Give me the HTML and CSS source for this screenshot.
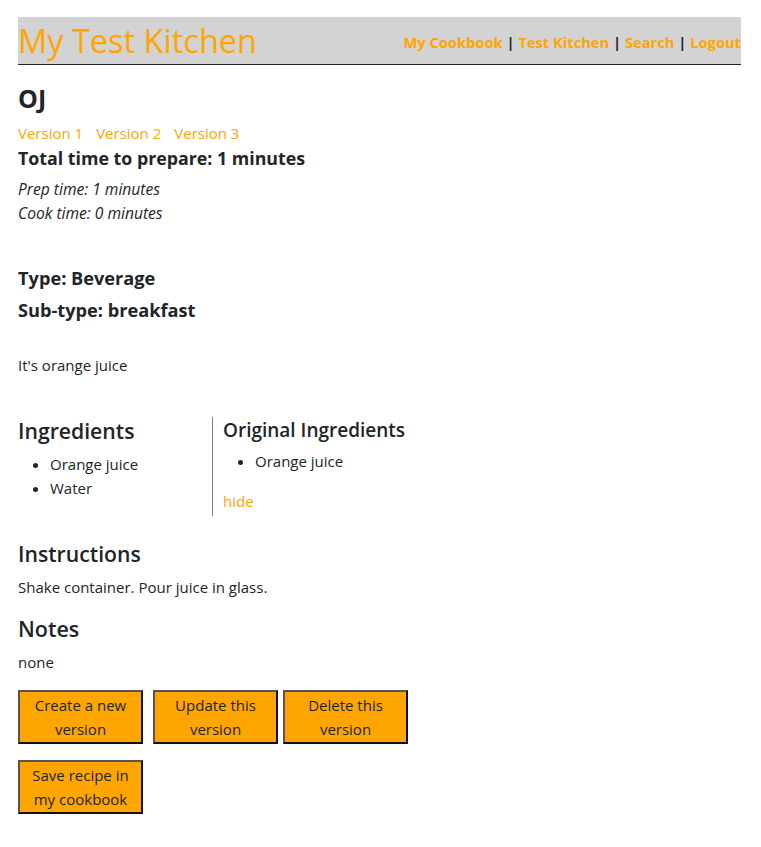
FILE: index.html
```html
<!DOCTYPE html>
<html lang="en">
<head>
<meta charset="utf-8">
<title>My Test Kitchen</title>
<link rel="stylesheet" href="styles.css">
</head>
<body>
<header class="topbar">
  <h1 class="brand">My Test Kitchen</h1>
  <nav class="nav">
    <a href="#" class="nav-link">My Cookbook</a> | <a href="#" class="nav-link">Test Kitchen</a> | <a href="#" class="nav-link">Search</a> | <a href="#" class="nav-link">Logout</a>
  </nav>
</header>

<main class="recipe">
  <h2 class="recipe-title">OJ</h2>
  <div class="versions">
    <a href="#" class="version-link">Version 1</a>
    <a href="#" class="version-link">Version 2</a>
    <a href="#" class="version-link">Version 3</a>
  </div>
  <h3 class="total-time">Total time to prepare: 1 minutes</h3>
  <p class="time-line">Prep time: 1 minutes</p>
  <p class="time-line">Cook time: 0 minutes</p>

  <h3 class="type-line type-first">Type: Beverage</h3>
  <h3 class="type-line">Sub-type: breakfast</h3>

  <p class="description">It's orange juice</p>

  <section class="ingredients-row">
    <div class="ingredients">
      <h2 class="section-title">Ingredients</h2>
      <ul class="ing-list">
        <li>Orange juice</li>
        <li>Water</li>
      </ul>
    </div>
    <div class="original">
      <h3 class="original-title">Original Ingredients</h3>
      <ul class="ing-list orig-list">
        <li>Orange juice</li>
      </ul>
      <a href="#" class="hide-link">hide</a>
    </div>
  </section>

  <h2 class="section-title instructions-title">Instructions</h2>
  <p class="body-text">Shake container. Pour juice in glass.</p>

  <h2 class="section-title notes-title">Notes</h2>
  <p class="body-text">none</p>

  <div class="button-row first-row">
    <button class="action-btn btn-create">Create a new version</button>
    <button class="action-btn">Update this version</button>
    <button class="action-btn">Delete this version</button>
  </div>
  <div class="button-row">
    <button class="action-btn">Save recipe in my cookbook</button>
  </div>
</main>
</body>
</html>
```
FILE: styles.css
```css
html, body {
  background: #ffffff;
}
body {
  margin: 17px 20px 0 18px;
  font-family: "Open Sans", "Noto Sans", sans-serif;
  font-size: 15px;
  line-height: 24px;
  color: #212529;
}
a {
  color: #ffa500;
  text-decoration: none;
}

/* Header */
.topbar {
  display: flex;
  align-items: center;
  justify-content: space-between;
  height: 47px;
  background: #d3d3d3;
  border-bottom: 1px solid #222222;
  overflow: hidden;
}
.brand {
  margin: -1px 0 0 0;
  font-size: 32.5px;
  line-height: 45px;
  font-weight: 400;
  color: #ffa500;
  white-space: nowrap;
}
.nav {
  font-size: 14.7px;
  line-height: 20px;
  font-weight: 700;
  white-space: nowrap;
  margin-top: 2px;
}
.nav-link {
  font-weight: 700;
}

/* Recipe heading */
.recipe-title {
  margin: 17px 0 0 0;
  font-size: 25px;
  line-height: 32px;
  font-weight: 700;
}
.versions {
  margin-top: 7px;
  display: flex;
  gap: 13px;
  line-height: 24px;
}
.total-time {
  margin: 0;
  font-size: 17.8px;
  line-height: 26px;
  font-weight: 700;
}
.time-line {
  margin: 0;
  font-style: italic;
  font-size: 15.6px;
}
.total-time + .time-line {
  margin-top: 6px;
}
.type-line {
  margin: 6px 0 0 0;
  font-size: 18.2px;
  line-height: 26px;
  font-weight: 700;
}
.type-first {
  margin-top: 40px;
}
.description {
  margin: 30px 0 0 0;
}

/* Ingredients */
.ingredients-row {
  display: flex;
  margin-top: 40px;
}
.ingredients {
  width: 194px;
}
.original {
  border-left: 1px solid #808080;
  padding: 0 0 3px 10px;
}
.section-title {
  margin: 0;
  font-size: 21.2px;
  line-height: 28px;
  font-weight: 600;
}
.original-title {
  margin: 0;
  font-size: 19px;
  line-height: 26px;
  font-weight: 600;
}
.ing-list {
  margin: 7px 0 0 0;
  padding-left: 32px;
}
.orig-list {
  margin-top: 6px;
}
.hide-link {
  display: block;
  margin-top: 16px;
}

.instructions-title {
  margin-top: 24px;
}
.notes-title {
  margin-top: 16px;
  font-size: 21.5px;
}
.body-text {
  margin: 7px 0 0 0;
}

/* Buttons */
.button-row {
  display: flex;
  gap: 5px;
  margin-top: 16px;
}
.action-btn {
  box-sizing: border-box;
  width: 125px;
  height: 54px;
  padding: 1px 6px;
  background: #ffa500;
  border-style: solid;
  border-width: 2px;
  border-color: #555555 #111111 #111111 #555555;
  font-family: "Open Sans", "Noto Sans", sans-serif;
  font-size: 15px;
  line-height: 24px;
  color: #212529;
  text-align: center;
  cursor: pointer;
}
.btn-create {
  margin-right: 5px;
}
```
